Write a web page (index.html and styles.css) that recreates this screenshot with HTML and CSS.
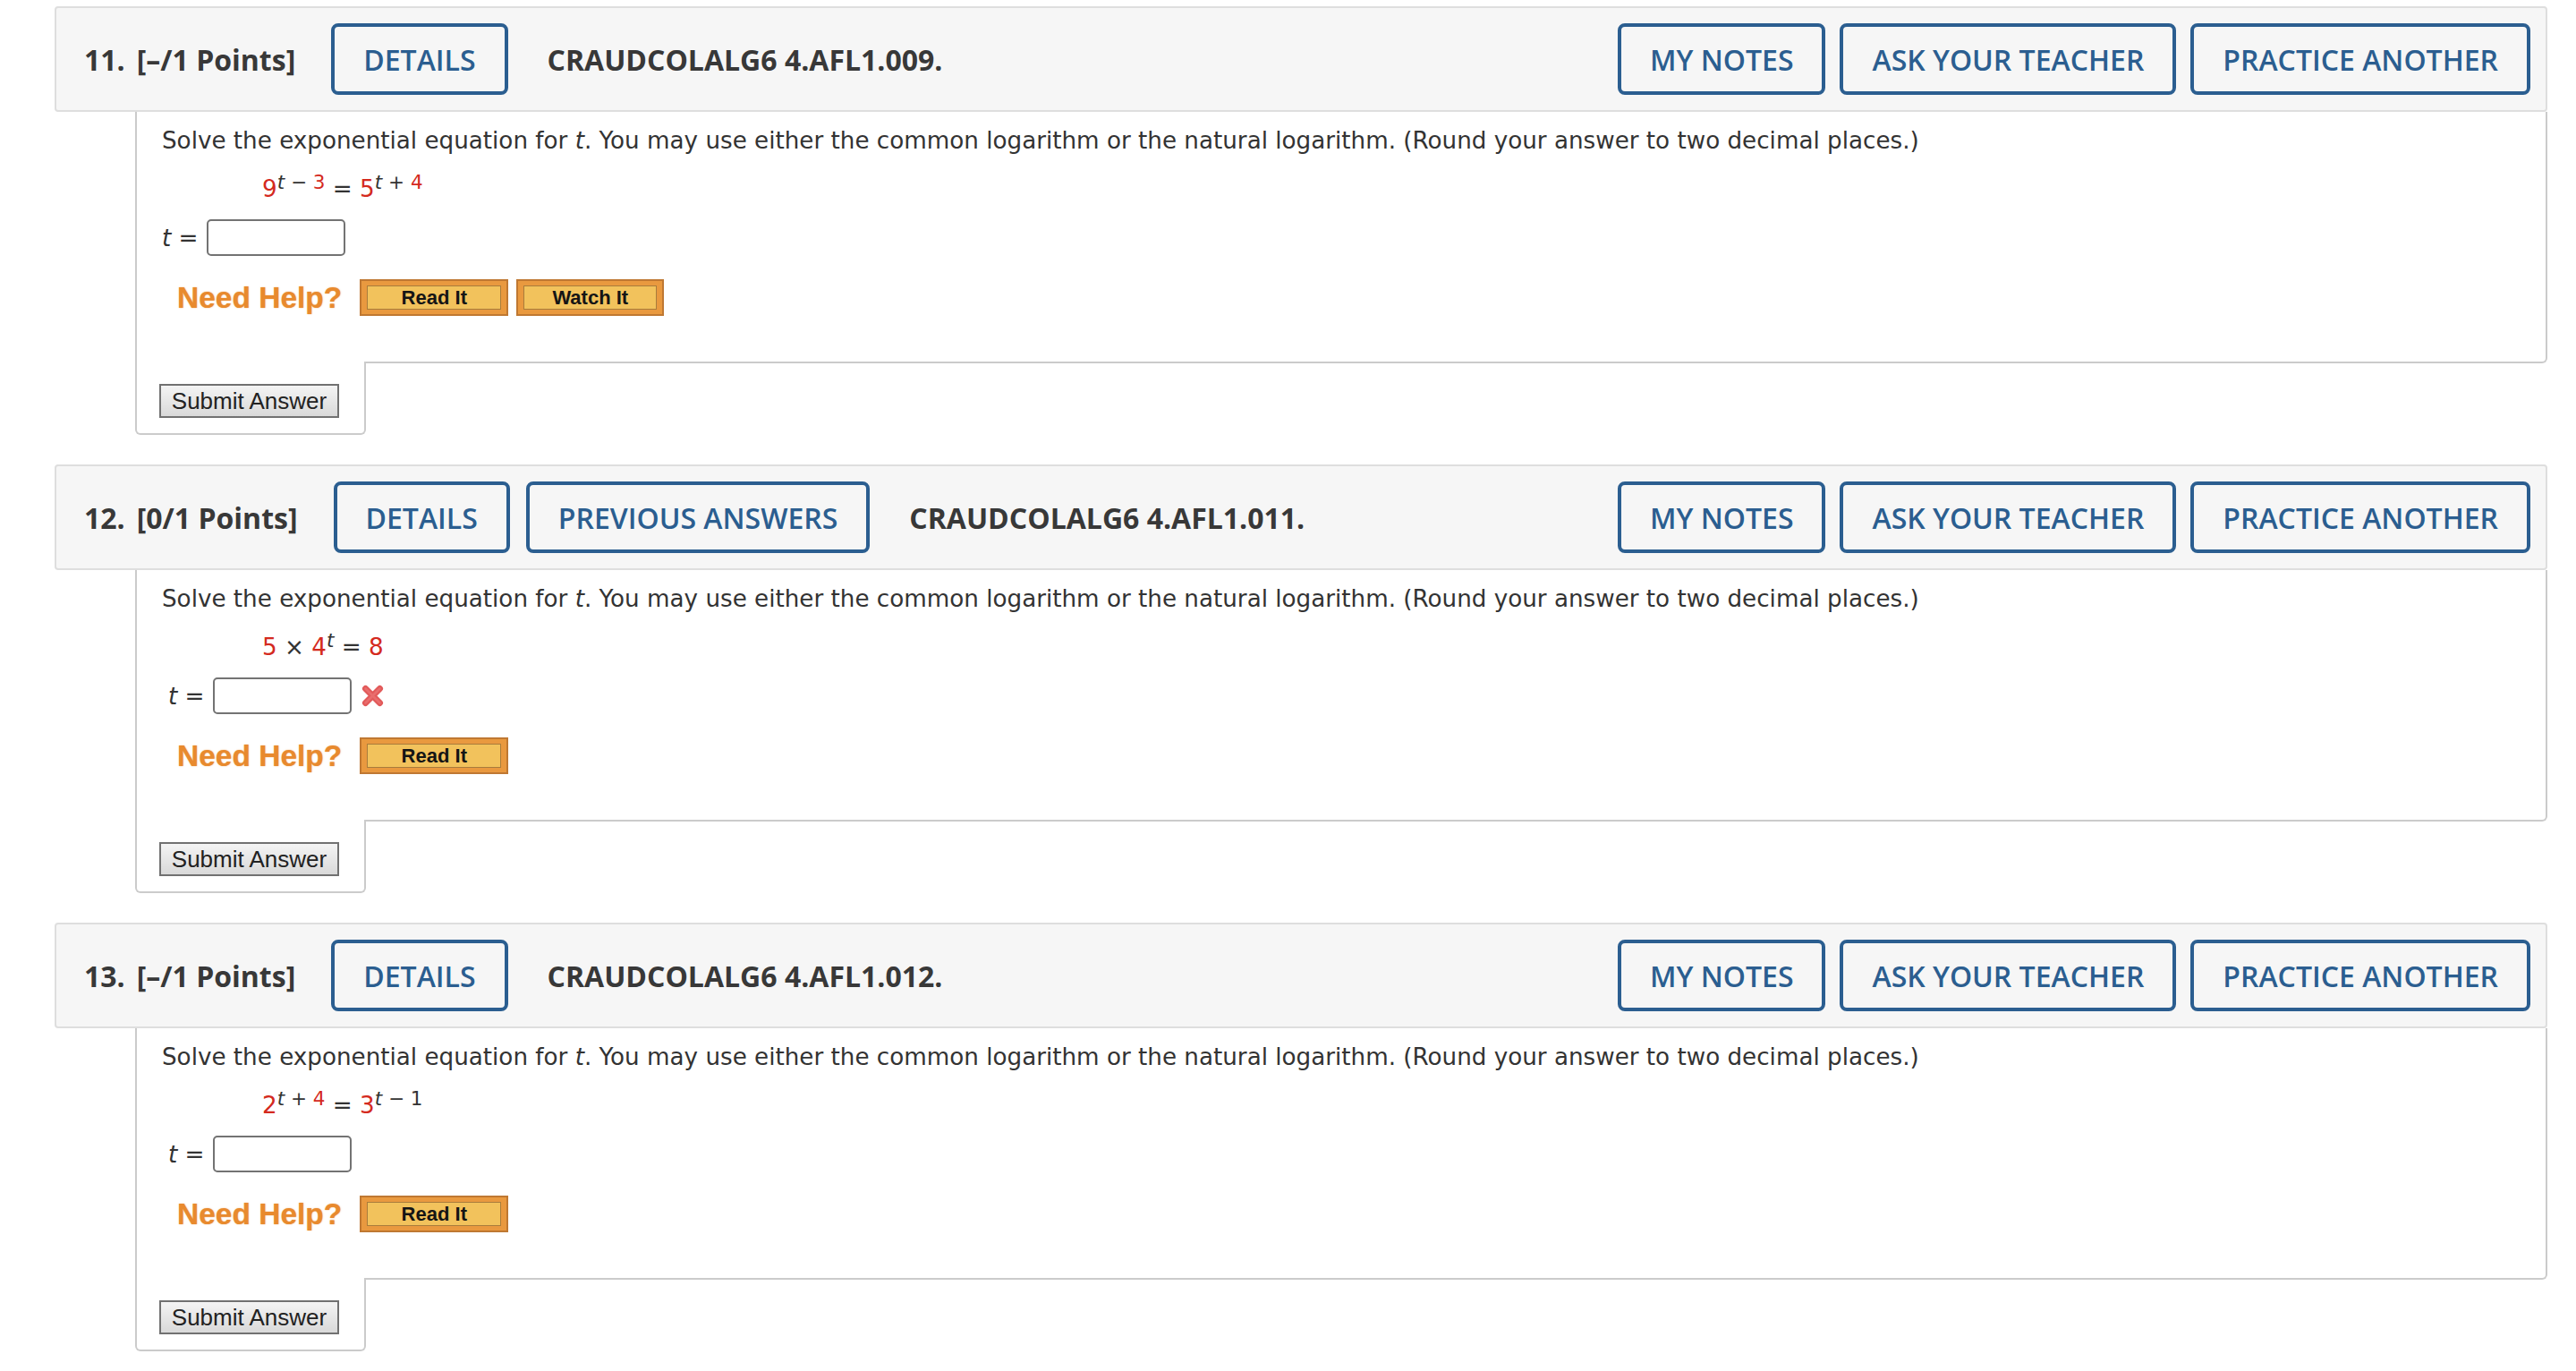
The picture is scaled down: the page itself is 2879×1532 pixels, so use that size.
FILE: index.html
```html
<!DOCTYPE html>
<html lang="en">
<head>
<meta charset="utf-8">
<title>Questions</title>
<link rel="stylesheet" href="styles.css">
</head>
<body>
<div class="page">

  <section class="question">
    <header class="qhead">
      <span class="qnum">11.</span><span class="qpts">[–/1 Points]</span>
      <button class="hbtn">DETAILS</button>
      <span class="qcode">CRAUDCOLALG6 4.AFL1.009.</span>
      <div class="hright">
        <button class="hbtn">MY NOTES</button>
        <button class="hbtn">ASK YOUR TEACHER</button>
        <button class="hbtn">PRACTICE ANOTHER</button>
      </div>
    </header>
    <div class="qbody">
      <p class="prompt">Solve the exponential equation for <i>t</i>. You may use either the common logarithm or the natural logarithm. (Round your answer to two decimal places.)</p>
      <div class="eq"><span class="r">9</span><sup><i>t</i> − <span class="r">3</span></sup> = <span class="r">5</span><sup><i>t</i> + <span class="r">4</span></sup></div>
      <div class="answer"><span class="lbl"><i>t</i> =</span><input class="ans" type="text"></div>
      <div class="help"><span class="need">Need Help?</span><button class="hb"><span>Read It</span></button><button class="hb watch"><span>Watch It</span></button></div>
    </div>
    <div class="tab"><button class="submit">Submit Answer</button></div>
  </section>

  <section class="question">
    <header class="qhead">
      <span class="qnum">12.</span><span class="qpts">[0/1 Points]</span>
      <button class="hbtn">DETAILS</button><button class="hbtn wide-gap">PREVIOUS ANSWERS</button>
      <span class="qcode">CRAUDCOLALG6 4.AFL1.011.</span>
      <div class="hright">
        <button class="hbtn">MY NOTES</button>
        <button class="hbtn">ASK YOUR TEACHER</button>
        <button class="hbtn">PRACTICE ANOTHER</button>
      </div>
    </header>
    <div class="qbody">
      <p class="prompt">Solve the exponential equation for <i>t</i>. You may use either the common logarithm or the natural logarithm. (Round your answer to two decimal places.)</p>
      <div class="eq"><span class="r">5</span> × <span class="r">4</span><sup><i>t</i></sup> = <span class="r">8</span></div>
      <div class="answer shift"><span class="lbl"><i>t</i> =</span><input class="ans" type="text"><svg class="wrong" width="27" height="27" viewBox="0 0 27 27" aria-label="incorrect"><path d="M5.5 5.5 L21.5 21.5 M21.5 5.5 L5.5 21.5" stroke="#e25a5a" stroke-width="7" stroke-linecap="round"/><path d="M5.5 5.5 L21.5 21.5 M21.5 5.5 L5.5 21.5" stroke="#ee7b7b" stroke-width="2.5" stroke-linecap="round" opacity="0.6"/></svg></div>
      <div class="help"><span class="need">Need Help?</span><button class="hb"><span>Read It</span></button></div>
    </div>
    <div class="tab"><button class="submit">Submit Answer</button></div>
  </section>

  <section class="question">
    <header class="qhead">
      <span class="qnum">13.</span><span class="qpts">[–/1 Points]</span>
      <button class="hbtn">DETAILS</button>
      <span class="qcode">CRAUDCOLALG6 4.AFL1.012.</span>
      <div class="hright">
        <button class="hbtn">MY NOTES</button>
        <button class="hbtn">ASK YOUR TEACHER</button>
        <button class="hbtn">PRACTICE ANOTHER</button>
      </div>
    </header>
    <div class="qbody">
      <p class="prompt">Solve the exponential equation for <i>t</i>. You may use either the common logarithm or the natural logarithm. (Round your answer to two decimal places.)</p>
      <div class="eq"><span class="r">2</span><sup><i>t</i> + <span class="r">4</span></sup> = <span class="r">3</span><sup><i>t</i> − 1</sup></div>
      <div class="answer shift"><span class="lbl"><i>t</i> =</span><input class="ans" type="text"></div>
      <div class="help"><span class="need">Need Help?</span><button class="hb"><span>Read It</span></button></div>
    </div>
    <div class="tab"><button class="submit">Submit Answer</button></div>
  </section>

</div>
</body>
</html>
```

FILE: styles.css
```css
* { box-sizing: border-box; }
html, body { margin: 0; padding: 0; background: #fff; }
body { font-family: "DejaVu Sans", Verdana, sans-serif; color: #333; }

.page { width: 2847px; padding: 7px 0 0 61px; }

.question { margin-bottom: 33px; }

.qhead {
  display: flex;
  align-items: center;
  height: 118px;
  padding: 0 17px 0 31px;
  background: #f6f6f6;
  border: 2px solid #dedede;
  border-radius: 4px;
  font-family: "Open Sans", "Liberation Sans", sans-serif;
  font-size: 32px;
}
.qnum, .qpts, .qcode { font-weight: 700; color: #383838; white-space: nowrap; }
.qnum { margin-right: 13px; }
.qpts { margin-right: 40px; }
.qcode { margin-left: 44px; }

.hbtn {
  font-family: "Open Sans", "Liberation Sans", sans-serif;
  font-size: 32px;
  font-weight: 600;
  color: #2b5e90;
  background: transparent;
  border: 4px solid #2b5e90;
  border-radius: 8px;
  height: 80px;
  padding: 0 32px;
  margin: 0;
  white-space: nowrap;
}
.hbtn + .hbtn { margin-left: 16px; }
.hbtn.wide-gap { margin-left: 18px; }
.hright { margin-left: auto; display: flex; }

.qbody {
  margin-left: 90px;
  border: 2px solid #cbcbcb;
  border-top: none;
  border-radius: 0 0 6px 0;
  padding: 14px 0 51px 28px;
  font-size: 26.2px;
}
.prompt { margin: 0; line-height: 36px; }
.eq { margin-top: 18px; padding-left: 112px; line-height: 36px; }
.eq sup { font-size: 21.5px; vertical-align: 9px; line-height: 0; }
.r { color: #d42a1e; }

.answer { display: flex; align-items: center; height: 41px; margin-top: 16px; }
.answer.shift { padding-left: 7px; }
.lbl { margin-right: 9px; }
.ans {
  width: 155px;
  height: 41px;
  border: 2px solid #737373;
  border-radius: 5px;
  background: #fff;
  margin: 0;
  padding: 0 6px;
}
.wrong { margin-left: 10px; }

.help { display: flex; align-items: center; height: 41px; margin-top: 26px; padding-left: 17px; }
.need {
  font-family: "Liberation Sans", Arial, sans-serif;
  font-weight: 700;
  font-size: 33.5px;
  color: #e88a2e;
  text-shadow: 0 0 1.5px rgba(232, 138, 46, 0.7);
  margin-right: 20px;
}
.hb {
  width: 166px;
  height: 41px;
  padding: 5px 6px;
  margin: 0;
  border: 2px solid #bf7832;
  background: #e9993f;
}
.hb.watch { width: 165px; margin-left: 9px; }
.hb span {
  display: flex;
  align-items: center;
  justify-content: center;
  height: 100%;
  border: 1px solid #a97c3c;
  background: #f2c25c;
  font-family: "Liberation Sans", Arial, sans-serif;
  font-weight: 700;
  font-size: 22px;
  color: #151515;
}

.tab {
  margin-left: 90px;
  margin-top: -2px;
  width: 258px;
  border: 2px solid #cbcbcb;
  border-top: none;
  border-radius: 0 0 6px 6px;
  background: #fff;
  padding: 25px 0 17px 25px;
}
.submit {
  display: block;
  width: 201px;
  height: 38px;
  margin: 0;
  padding: 0;
  border: 2px solid #717171;
  background: linear-gradient(#f4f4f4, #d9d9d9);
  font-family: "Liberation Sans", Arial, sans-serif;
  font-size: 26px;
  color: #222;
}
```
